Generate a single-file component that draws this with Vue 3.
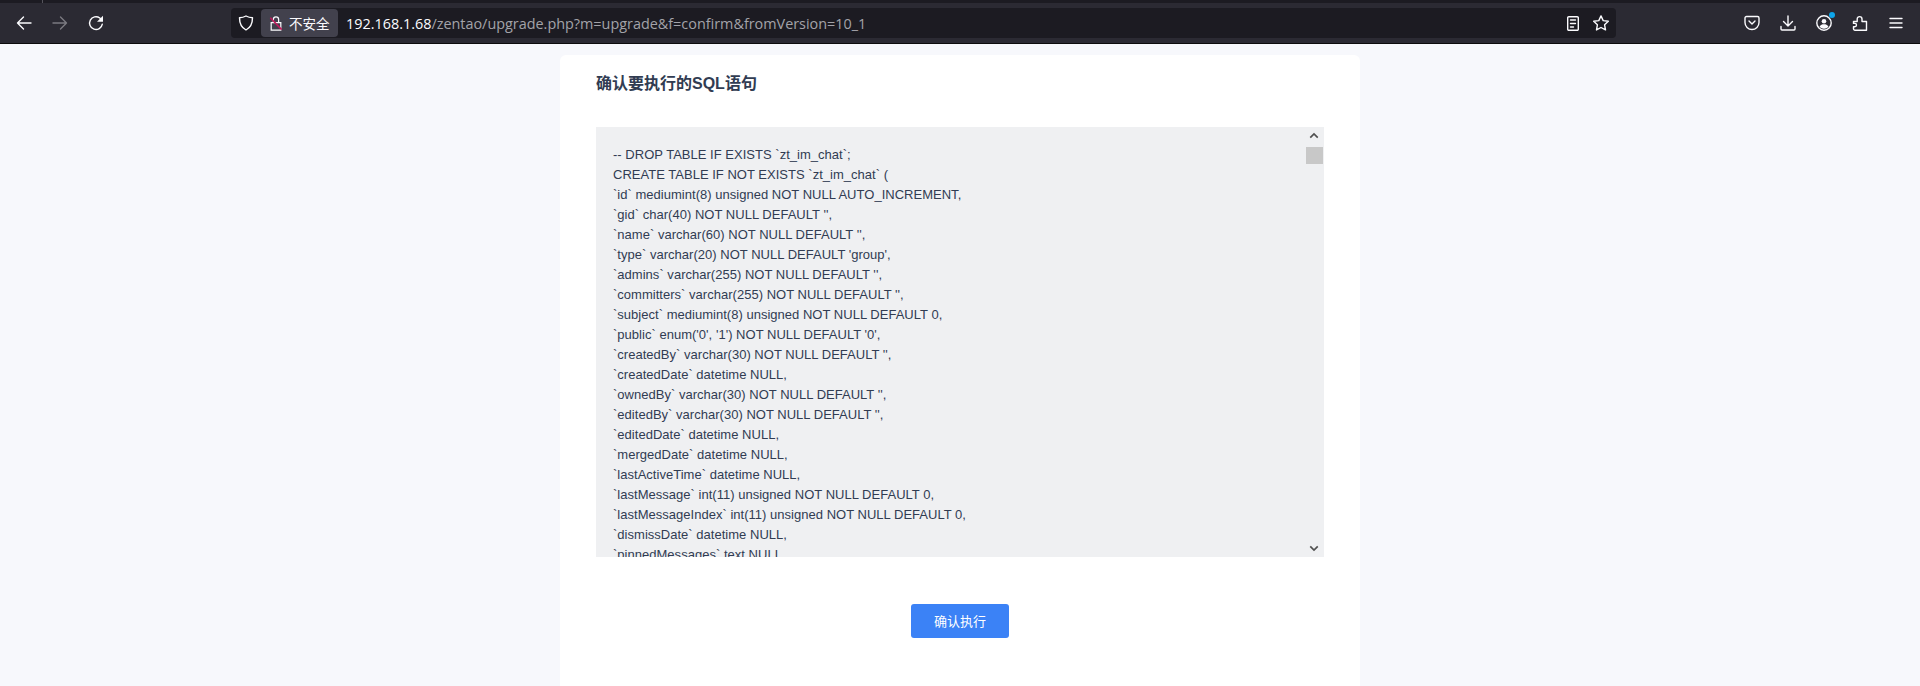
<script setup>
const sql = [
  "-- DROP TABLE IF EXISTS `zt_im_chat`;",
  "CREATE TABLE IF NOT EXISTS `zt_im_chat` (",
  "`id` mediumint(8) unsigned NOT NULL AUTO_INCREMENT,",
  "`gid` char(40) NOT NULL DEFAULT '',",
  "`name` varchar(60) NOT NULL DEFAULT '',",
  "`type` varchar(20) NOT NULL DEFAULT 'group',",
  "`admins` varchar(255) NOT NULL DEFAULT '',",
  "`committers` varchar(255) NOT NULL DEFAULT '',",
  "`subject` mediumint(8) unsigned NOT NULL DEFAULT 0,",
  "`public` enum('0', '1') NOT NULL DEFAULT '0',",
  "`createdBy` varchar(30) NOT NULL DEFAULT '',",
  "`createdDate` datetime NULL,",
  "`ownedBy` varchar(30) NOT NULL DEFAULT '',",
  "`editedBy` varchar(30) NOT NULL DEFAULT '',",
  "`editedDate` datetime NULL,",
  "`mergedDate` datetime NULL,",
  "`lastActiveTime` datetime NULL,",
  "`lastMessage` int(11) unsigned NOT NULL DEFAULT 0,",
  "`lastMessageIndex` int(11) unsigned NOT NULL DEFAULT 0,",
  "`dismissDate` datetime NULL,",
  "`pinnedMessages` text NULL,"
]
</script>

<template>
  <div class="page">
    <header class="chrome">
      <div class="tabstrip"><i class="tabsep"></i></div>
      <div class="toolbar">
        <div class="nav">
          <svg class="ico" viewBox="0 0 16 16"><path d="M15 8H1.500M7.500 2 1.500 8l6 6" /></svg>
          <svg class="ico dim" viewBox="0 0 16 16"><path d="M1 8h13.500M8.500 2l6 6-6 6" /></svg>
          <svg class="ico" viewBox="0 0 16 16"><path d="M14.300 9.200A6.400 6.400 0 1 1 11.800 3l2.200 2.200" /><path class="fill" d="M15 .8v6H9z" /></svg>
        </div>
        <div class="urlbar">
          <svg class="ico shield" viewBox="0 0 16 16"><path d="M8 1c2 1.100 4 1.700 6.500 1.800 0 5.800-2 9.900-6.500 12.200C3.500 12.700 1.500 8.600 1.500 2.800 4 2.700 6 2.100 8 1z" /></svg>
          <div class="pill">
            <svg class="lock" viewBox="0 0 16 18"><path d="M5 8V4.500a3 3 0 0 1 6 0V8M2.500 8h11v8.500h-11z" /><path class="slash" d="M1.500 2.500 14.500 16" /></svg>
            <span>不安全</span>
          </div>
          <div class="url"><span class="host">192.168.1.68</span>/zentao/upgrade.php?m=upgrade&amp;f=confirm&amp;fromVersion=10_1</div>
          <svg class="ico doc" viewBox="0 0 12 15"><path d="M1.800.7h8.400a1.100 1.100 0 0 1 1.100 1.100v11.400a1.100 1.100 0 0 1-1.100 1.100H1.800a1.100 1.100 0 0 1-1.100-1.100V1.800A1.100 1.100 0 0 1 1.800.7zM3.500 4h5M3.500 7.500h5M3.500 11h3" /></svg>
          <svg class="ico star" viewBox="0 0 16 16"><path d="m8 .9 2.200 4.700 5.100.7-3.700 3.500.9 5.100L8 12.500l-4.500 2.400.9-5.100L.7 6.300l5.100-.7z" /></svg>
        </div>
        <div class="tools">
          <svg class="ico pocket" viewBox="0 0 16 16"><path d="M2.500 1.500h11A1.500 1.500 0 0 1 15 3v4.500a7 7 0 0 1-14 0V3a1.500 1.500 0 0 1 1.500-1.500zM5 6l3 3 3-3" /></svg>
          <svg class="ico" viewBox="0 0 16 16"><path d="M8 1v10M3.500 6.500 8 11l4.500-4.500M1 11.500v2.500a1 1 0 0 0 1 1h12a1 1 0 0 0 1-1v-2.500" /></svg>
          <div class="account">
            <svg class="ico" viewBox="0 0 16 16"><circle cx="8" cy="8" r="7.200" /><circle class="fill" cx="8" cy="6.200" r="2.300" /><path class="fill" d="M3.500 11.700C4.600 9.800 6.100 9.300 8 9.300s3.400.5 4.500 2.400A5.700 5.700 0 0 1 8 13.800a5.700 5.700 0 0 1-4.500-2.100z" /></svg>
            <i class="dot"></i>
          </div>
          <svg class="ico" viewBox="0 0 16 16"><path d="M1.500 6.500h3.700V4a2.400 2.400 0 1 1 4.800 0v2.500h4.500v8.800H3a1.500 1.500 0 0 1-1.500-1.500v-2h1.300a1.700 1.700 0 0 0 0-3.400H1.500z" /></svg>
          <svg class="ico" viewBox="0 0 16 16"><path d="M2 3.500h12M2 8h12M2 12.500h12" /></svg>
        </div>
      </div>
    </header>

    <main class="content">
      <section class="card">
        <h2 class="title">确认要执行的SQL语句</h2>
        <div class="box">
          <div class="code">
            <div v-for="line in sql" :key="line" class="line">{{ line }}</div>
          </div>
          <div class="scrollbar">
            <svg class="arrow up" viewBox="0 0 12 8"><path d="M1.500 6.500 6 2l4.500 4.500" /></svg>
            <div class="thumb"></div>
            <div class="track"></div>
            <svg class="arrow down" viewBox="0 0 12 8"><path d="M1.500 1.500 6 6l4.500-4.500" /></svg>
          </div>
        </div>
        <div class="actions">
          <button class="btn" type="button">确认执行</button>
        </div>
      </section>
    </main>
  </div>
</template>

<style>
html, body { margin: 0; overflow: hidden; }
</style>

<style scoped>
.page {
  height: 686px;
  display: flex;
  flex-direction: column;
  background: #f7f8fc;
  font-family: "Liberation Sans", "Noto Sans CJK SC", sans-serif;
  overflow: hidden;
}
.chrome { flex: none; background: #2b2a33; border-bottom: 1px solid #0c0c0d; }
.tabstrip { height: 3px; background: #1c1b22; padding-left: 42px; }
.tabsep { display: block; width: 1px; height: 3px; background: #55545c; }
.toolbar {
  height: 40px;
  display: flex;
  align-items: center;
  padding-left: 16px;
  padding-right: 16px;
  background: #2b2a33;
}
.nav { width: 215px; display: flex; gap: 20px; flex: none; }
.ico { width: 16px; height: 16px; flex: none; fill: none; stroke: #fbfbfe; stroke-width: 1.400; stroke-linejoin: round; stroke-linecap: round; }
.ico .fill { fill: #fbfbfe; stroke: none; }
.ico.dim { stroke: #7b7a81; }
.urlbar {
  width: 1385px;
  height: 30px;
  flex: none;
  box-sizing: border-box;
  display: flex;
  align-items: center;
  background: #1c1b22;
  border-radius: 4px;
  padding-left: 7px;
  padding-right: 7px;
  color: #a3a3a9;
  font-family: "Open Sans", "Noto Sans CJK SC", sans-serif;
  font-size: 14px;
}
.shield { width: 16px; height: 16px; margin-right: 7px; }
.pill {
  width: 77px;
  height: 28px;
  flex: none;
  box-sizing: border-box;
  padding-left: 8px;
  display: flex;
  align-items: center;
  gap: 6px;
  background: #42414d;
  border-radius: 4px;
  color: #fbfbfe;
  font-size: 13.500px;
}
.lock { width: 14px; height: 17px; fill: none; stroke: #fbfbfe; stroke-width: 1.400; }
.lock .slash { stroke: #c2185b; stroke-width: 1.800; }
.url { flex: 1; margin-left: 8px; white-space: nowrap; font-size: 14.400px; }
.host { color: #fbfbfe; }
.doc { width: 12px; height: 15px; margin-right: 14px; }
.star { width: 16px; height: 16px; }
.tools { flex: 1; display: flex; justify-content: flex-end; gap: 20px; align-items: center; }
.account { position: relative; width: 16px; height: 16px; }
.dot { position: absolute; top: -3px; right: -3px; width: 6px; height: 6px; border-radius: 50%; background: #0ea5e9; }
.content { flex: 1; min-height: 0; display: flex; justify-content: center; padding-top: 11px; }
.card {
  width: 800px;
  box-sizing: border-box;
  background: #fff;
  border-radius: 6px 6px 0 0;
  padding: 0 35px 0 36px;
}
.title {
  margin: 0;
  padding-top: 19px;
  height: 54px;
  box-sizing: border-box;
  font-size: 16px;
  line-height: 20px;
  font-weight: 700;
  color: #313c52;
}
.box {
  margin-top: 18px;
  height: 430px;
  width: 728px;
  background: #eff0f2;
  display: flex;
  overflow: hidden;
}
.code {
  flex: 1;
  min-width: 0;
  padding: 18px 0 0 17px;
  font-size: 13px;
  line-height: 20px;
  letter-spacing: .02px;
  color: #313c52;
  white-space: nowrap;
  overflow: hidden;
}
.scrollbar {
  width: 19px;
  flex: none;
  display: flex;
  flex-direction: column;
  align-items: center;
  padding-right: 1px;
  box-sizing: border-box;
}
.arrow { width: 10px; height: 7px; flex: none; fill: none; stroke: #505050; stroke-width: 2; }
.arrow.up { margin: 5px 0 8px; }
.arrow.down { margin: 0 0 5px; }
.thumb { width: 17px; height: 17px; background: #c8c8c8; flex: none; }
.track { flex: 1; }
.actions { display: flex; justify-content: center; margin-top: 47px; padding-right: 1px; }
.btn {
  width: 98px;
  height: 34px;
  border: 0;
  border-radius: 3px;
  padding: 0 0 1px;
  background: #3b82f6;
  color: #fff;
  font-family: "Liberation Sans", "Noto Sans CJK SC", sans-serif;
  font-size: 13px;
}
</style>
